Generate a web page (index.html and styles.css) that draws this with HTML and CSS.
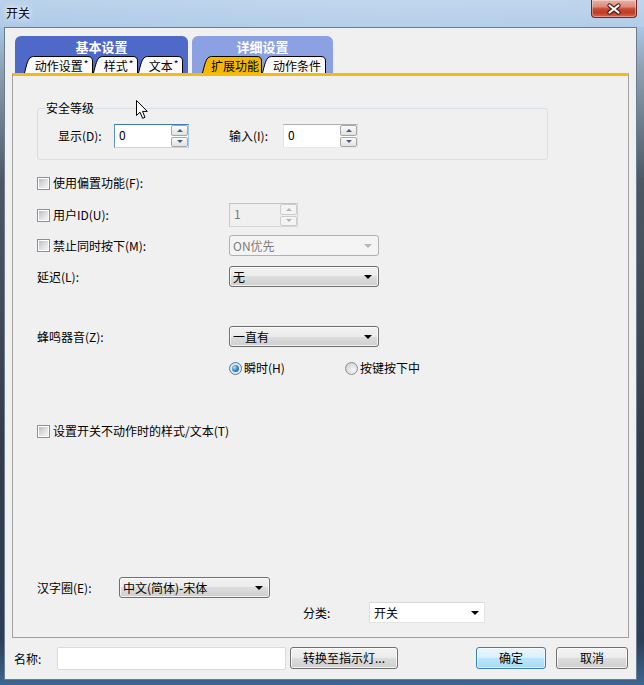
FILE: index.html
```html
<!DOCTYPE html>
<html lang="zh-CN">
<head>
<meta charset="utf-8">
<title>开关</title>
<link rel="stylesheet" href="styles.css">
</head>
<body>
<div class="window">
  <div class="titlebar">
    <span class="title">开关</span>
    <div class="close">
      <svg width="16" height="12" viewBox="0 0 16 12"><path d="M3.5 2.5 L12.5 9.5 M12.5 2.5 L3.5 9.5" stroke="#4a1c16" stroke-width="4.2" stroke-linecap="round"/><path d="M3.5 2.5 L12.5 9.5 M12.5 2.5 L3.5 9.5" stroke="#fff" stroke-width="2.2" stroke-linecap="round"/></svg>
    </div>
  </div>
  <div class="client">
    <div class="tabgroups">
      <div class="tgroup basic">
        <div class="tgroup-title">基本设置</div>
        <div class="subtabs">
          <div class="subtab" style="width:69px"><svg class="tabshape" width="69" height="17" viewBox="0 0 69 17"><path d="M0.5 17 C2.5 9 4 2.5 7 1.2 Q8 0.5 9.5 0.5 H64 Q68.5 0.5 68.5 5 V17"/></svg><span class="tt">动作设置<sup>*</sup></span></div>
          <div class="subtab" style="width:45px"><svg class="tabshape" width="45" height="17" viewBox="0 0 45 17"><path d="M0.5 17 C2.5 9 4 2.5 7 1.2 Q8 0.5 9.5 0.5 H40 Q44.5 0.5 44.5 5 V17"/></svg><span class="tt">样式<sup>*</sup></span></div>
          <div class="subtab" style="width:45px"><svg class="tabshape" width="45" height="17" viewBox="0 0 45 17"><path d="M0.5 17 C2.5 9 4 2.5 7 1.2 Q8 0.5 9.5 0.5 H40 Q44.5 0.5 44.5 5 V17"/></svg><span class="tt">文本<sup>*</sup></span></div>
        </div>
      </div>
      <div class="tgroup detail">
        <div class="tgroup-title">详细设置</div>
        <div class="subtabs">
          <div class="subtab active" style="width:60px"><svg class="tabshape" width="60" height="17" viewBox="0 0 60 17"><path d="M0.5 17 C2.5 9 4 2.5 7 1.2 Q8 0.5 9.5 0.5 H55 Q59.5 0.5 59.5 5 V17"/></svg><span class="tt">扩展功能</span></div>
          <div class="subtab" style="width:64px"><svg class="tabshape" width="64" height="17" viewBox="0 0 64 17"><path d="M0.5 17 C2.5 9 4 2.5 7 1.2 Q8 0.5 9.5 0.5 H59 Q63.5 0.5 63.5 5 V17"/></svg><span class="tt">动作条件</span></div>
        </div>
      </div>
    </div>

    <div class="panel">
      <fieldset class="group">
        <legend>安全等级</legend>
        <div class="srow">
          <span class="slbl w56">显示(D):</span>
          <div class="spin focus">
            <span class="val">0</span>
            <div class="btns"><div class="sbtn"><i class="up"></i></div><div class="sbtn"><i class="down"></i></div></div>
          </div>
          <span class="slbl w54 ml40">输入(I):</span>
          <div class="spin">
            <span class="val">0</span>
            <div class="btns"><div class="sbtn"><i class="up"></i></div><div class="sbtn"><i class="down"></i></div></div>
          </div>
        </div>
      </fieldset>

      <div class="row r-f">
        <span class="cb"></span><span>使用偏置功能(F):</span>
      </div>

      <div class="row r-u">
        <span class="lbl"><span class="cb"></span><span>用户ID(U):</span></span>
        <div class="spin dis">
          <span class="val">1</span>
          <div class="btns"><div class="sbtn"><i class="up"></i></div><div class="sbtn"><i class="down"></i></div></div>
        </div>
      </div>

      <div class="row r-m">
        <span class="lbl"><span class="cb"></span><span>禁止同时按下(M):</span></span>
        <div class="combo dis"><span>ON优先</span><i class="arrow"></i></div>
      </div>

      <div class="row r-l">
        <span class="lbl">延迟(L):</span>
        <div class="combo"><span>无</span><i class="arrow"></i></div>
      </div>

      <div class="row r-z">
        <span class="lbl">蜂鸣器音(Z):</span>
        <div class="combo"><span>一直有</span><i class="arrow"></i></div>
      </div>

      <div class="radios">
        <span class="ritem"><span class="radio on"></span><span>瞬时(H)</span></span>
        <span class="ritem"><span class="radio"></span><span>按键按下中</span></span>
      </div>

      <div class="row r-t">
        <span class="cb"></span><span>设置开关不动作时的样式/文本(T)</span>
      </div>

      <div class="row r-e">
        <span class="lbl w82">汉字圈(E):</span>
        <div class="combo w151"><span>中文(简体)-宋体</span><i class="arrow"></i></div>
      </div>

      <div class="row r-c">
        <span class="lbl w66">分类:</span>
        <div class="combo flat w116"><span>开关</span><i class="arrow"></i></div>
      </div>
    </div>

    <div class="bottom">
      <span class="nlbl">名称:</span>
      <div class="nameinput"></div>
      <div class="btn b-conv">转换至指示灯...</div>
      <div class="btn def b-ok">确定</div>
      <div class="btn b-cancel">取消</div>
    </div>
  </div>

  <svg class="cursor" width="13" height="20" viewBox="0 0 13 20"><path d="M0.5 0.5 V15.5 L4 12.2 L6.6 18.3 L9 17.3 L6.5 11.4 H11.3 Z" fill="#fff" stroke="#000" stroke-width="1" stroke-linejoin="round"/></svg>
</div>
</body>
</html>
```

FILE: styles.css
```css
* { box-sizing: border-box; }
html, body { margin: 0; padding: 0; }
body {
  width: 644px;
  height: 685px;
  overflow: hidden;
  font-family: "Noto Sans CJK SC", "Microsoft YaHei", sans-serif;
  font-size: 12px;
  line-height: 14px;
  color: #000;
}

.window {
  position: relative;
  width: 644px;
  height: 685px;
  display: flex;
  flex-direction: column;
  background: linear-gradient(180deg, #b7d0ea 0px, #aac7e6 27px, #8d9fb2 70px, #4d5864 180px, #343d47 450px, #2c3e56 640px, #3e6690 685px);
}

/* title bar */
.titlebar {
  height: 27px;
  flex: none;
  display: flex;
  justify-content: space-between;
  align-items: flex-start;
  padding-left: 6px;
  background: linear-gradient(90deg, rgba(255,255,255,0.05), rgba(255,255,255,0.15) 60%, rgba(255,255,255,0.1));
}
.title {
  margin-top: 6px;
  line-height: 14px;
  text-shadow: 0 0 5px #fff, 0 0 8px #fff;
}
.close {
  width: 46px;
  height: 18px;
  margin-right: 7px;
  border: 1px solid #6a2a22;
  border-top: none;
  border-radius: 0 0 4px 4px;
  background: linear-gradient(180deg, #eab2a6 0%, #dc8a78 40%, #c84a33 52%, #c23b24 75%, #d8684c 100%);
  box-shadow: inset 0 0 0 1px rgba(255,255,255,0.35);
  display: flex;
  align-items: center;
  justify-content: center;
}

/* client area */
.client {
  flex: none;
  height: 653px;
  margin: 0 7px 0 4px;
  background: #f0f0f0;
  border: 1px solid #6a7c90;
}

/* tab groups */
.tabgroups {
  display: flex;
  gap: 4px;
  padding: 8px 0 0 10px;
}
.tgroup {
  height: 37px;
  border-radius: 6px 6px 0 0;
  display: flex;
  flex-direction: column;
}
.basic { width: 173px; background: #4f69c9; }
.detail { width: 141px; background: #8ca1e2; }
.tgroup-title {
  height: 20px;
  line-height: 22px;
  text-align: center;
  color: #fff;
  font-weight: bold;
  font-size: 13px;
}
.subtabs {
  display: flex;
  height: 17px;
  align-items: flex-end;
}
.basic .subtabs { padding-left: 9px; }
.detail .subtabs { padding-left: 10px; }
.subtab {
  position: relative;
  height: 17px;
  flex: none;
  display: flex;
  align-items: center;
  justify-content: center;
  padding-left: 6px;
  font-size: 12px;
}
.tabshape {
  position: absolute;
  left: 0;
  top: 0;
}
.tabshape path { fill: #fbfbfb; stroke: #000; stroke-width: 1; }
.subtab.active .tabshape path { fill: #f4b800; }
.tt { position: relative; line-height: 16px; padding-top: 2px; }
.tt sup { font-size: 10px; line-height: 0; vertical-align: 3px; margin-left: 1px; }

/* panel */
.panel {
  margin: 0 7px;
  height: 565px;
  border: 1px solid #a0a0a0;
  border-top: 3px solid #f2bd10;
  padding-left: 24px;
  display: flex;
  flex-direction: column;
  align-items: flex-start;
}

.group {
  margin: 25px 0 0 0;
  width: 511px;
  padding: 9px 0 11px 7px;
  border: 1px solid #d5dfe5;
  border-radius: 3px;
}
.group legend {
  padding: 0 1px;
  line-height: 14px;
}
.srow {
  display: flex;
  align-items: center;
  padding-left: 13px;
  height: 24px;
}
.slbl { flex: none; }
.w56 { width: 56px; }
.w54 { width: 54px; }
.ml40 { margin-left: 40px; }

/* spin box */
.spin {
  width: 75px;
  height: 24px;
  flex: none;
  display: flex;
  background: #fff;
  border: 1px solid;
  border-color: #abadb3 #dbdfe6 #e3e9ef #e2e3ea;
}
.spin.focus { border-color: #3d7bad #a4c9e3 #b7d9ed #5d95c0; }
.spin .val {
  flex: 1;
  padding: 1px 0 0 4px;
  line-height: 18px;
}
.spin .btns {
  width: 17px;
  display: flex;
  flex-direction: column;
  gap: 1px;
  padding: 0 0 0 0;
}
.sbtn {
  flex: 1;
  border: 1px solid #a3a6ab;
  border-radius: 2px;
  background: linear-gradient(180deg, #fafafa 0%, #eeeeee 50%, #e1e1e1 100%);
  display: flex;
  align-items: center;
  justify-content: center;
}
.sbtn i { width: 0; height: 0; border-left: 3px solid transparent; border-right: 3px solid transparent; }
.sbtn .up { border-bottom: 3px solid #4a5d78; }
.sbtn .down { border-top: 3px solid #4a5d78; }
.spin.dis { width: 69px; background: #f0f0f0; border-color: #c3c3c3 #d5d5d5 #d5d5d5 #c8c8c8; color: #7a7a7a; }
.spin.dis .sbtn { border-color: #cdcdcd; background: #f4f4f4; }
.spin.dis .sbtn .up { border-bottom-color: #b3b3b3; }
.spin.dis .sbtn .down { border-top-color: #b3b3b3; }

/* rows */
.row {
  display: flex;
  align-items: center;
}
.lbl {
  width: 192px;
  flex: none;
  display: flex;
  align-items: center;
}
.w82 { width: 82px; }
.w66 { width: 66px; }
.r-f { margin-top: 13px; height: 20px; }
.r-u { margin-top: 10px; height: 24px; }
.r-m { margin-top: 8px; height: 21px; }
.r-l { margin-top: 10px; height: 21px; }
.r-z { margin-top: 39px; height: 21px; }
.r-t { margin-top: 45px; height: 20px; }
.r-e { margin-top: 136px; height: 21px; }
.r-c { margin-top: 4px; height: 21px; margin-left: 266px; }

/* checkbox */
.cb {
  width: 13px;
  height: 13px;
  flex: none;
  margin-right: 3px;
  border: 1px solid #8e8f8f;
  background: #fff;
  padding: 1px;
}
.cb::before {
  content: "";
  display: block;
  width: 9px;
  height: 9px;
  background: linear-gradient(135deg, #b9bdc3 0%, #dcdee1 50%, #f6f6f6 100%);
}

/* radios */
.radios {
  margin-top: 13px;
  height: 16px;
  padding-left: 192px;
  display: flex;
  align-items: center;
}
.ritem { display: flex; align-items: center; }
.ritem:first-child { width: 116px; }
.radio {
  width: 13px;
  height: 13px;
  margin-right: 2px;
  border-radius: 50%;
  border: 1px solid #8e8f8f;
  background: radial-gradient(circle at 65% 65%, #f6f6f6 0%, #dcdee1 55%, #c2c5ca 100%);
  display: flex;
  align-items: center;
  justify-content: center;
}
.radio.on { border-color: #4a7aa8; background: radial-gradient(circle at 60% 60%, #f4f7fa, #cdd9e4); }
.radio.on::before {
  content: "";
  width: 7px;
  height: 7px;
  border-radius: 50%;
  background: radial-gradient(circle at 35% 35%, #b6e3ff 0%, #3b8fd0 45%, #0d4f86 100%);
}

/* combo */
.combo {
  width: 150px;
  height: 21px;
  flex: none;
  border: 1px solid #707070;
  border-radius: 3px;
  background: linear-gradient(180deg, #f2f2f2 0%, #ebebeb 50%, #dddddd 50%, #cfcfcf 100%);
  box-shadow: inset 0 0 0 1px rgba(255,255,255,0.7);
  display: flex;
  align-items: center;
  justify-content: space-between;
  padding: 0 6px 0 3px;
  line-height: 19px;
}
.arrow {
  width: 0;
  height: 0;
  border-left: 4px solid transparent;
  border-right: 4px solid transparent;
  border-top: 4px solid #000;
}
.combo.dis {
  border-color: #adb2b5;
  background: #f4f4f4;
  box-shadow: none;
  color: #7d7d7d;
}
.combo.dis .arrow { border-top-color: #b8b8b8; }
.combo.w151 { width: 151px; }
.combo.flat {
  width: 116px;
  border-radius: 0;
  border-color: #d9d9d9 #e3e3e3 #e3e3e3 #dedede;
  background: #fff;
  box-shadow: none;
  padding: 0 5px 0 4px;
}

/* bottom */
.bottom {
  margin-top: 9px;
  padding-left: 9px;
  display: flex;
  align-items: flex-start;
}
.nlbl { width: 43px; height: 23px; line-height: 23px; flex: none; }
.nameinput {
  width: 229px;
  height: 23px;
  background: #fff;
  border: 1px solid #dadada;
  border-radius: 2px;
}
.btn {
  height: 22px;
  flex: none;
  border: 1px solid #707070;
  border-radius: 3px;
  background: linear-gradient(180deg, #f2f2f2 0%, #ebebeb 50%, #dddddd 50%, #cfcfcf 100%);
  box-shadow: inset 0 0 0 1px rgba(255,255,255,0.75);
  display: flex;
  align-items: center;
  justify-content: center;
  line-height: 20px;
}
.btn.def {
  border-color: #3c7fb1;
  background: linear-gradient(180deg, #eaf6fd 0%, #d9f0fc 50%, #bee6fd 50%, #a7d9f5 100%);
  box-shadow: inset 0 0 0 1px rgba(255,255,255,0.6);
}
.b-conv { width: 108px; margin-left: 4px; }
.b-ok { width: 70px; margin-left: 78px; }
.b-cancel { width: 72px; margin-left: 10px; }

.cursor {
  position: absolute;
  left: 136px;
  top: 100px;
}
```
